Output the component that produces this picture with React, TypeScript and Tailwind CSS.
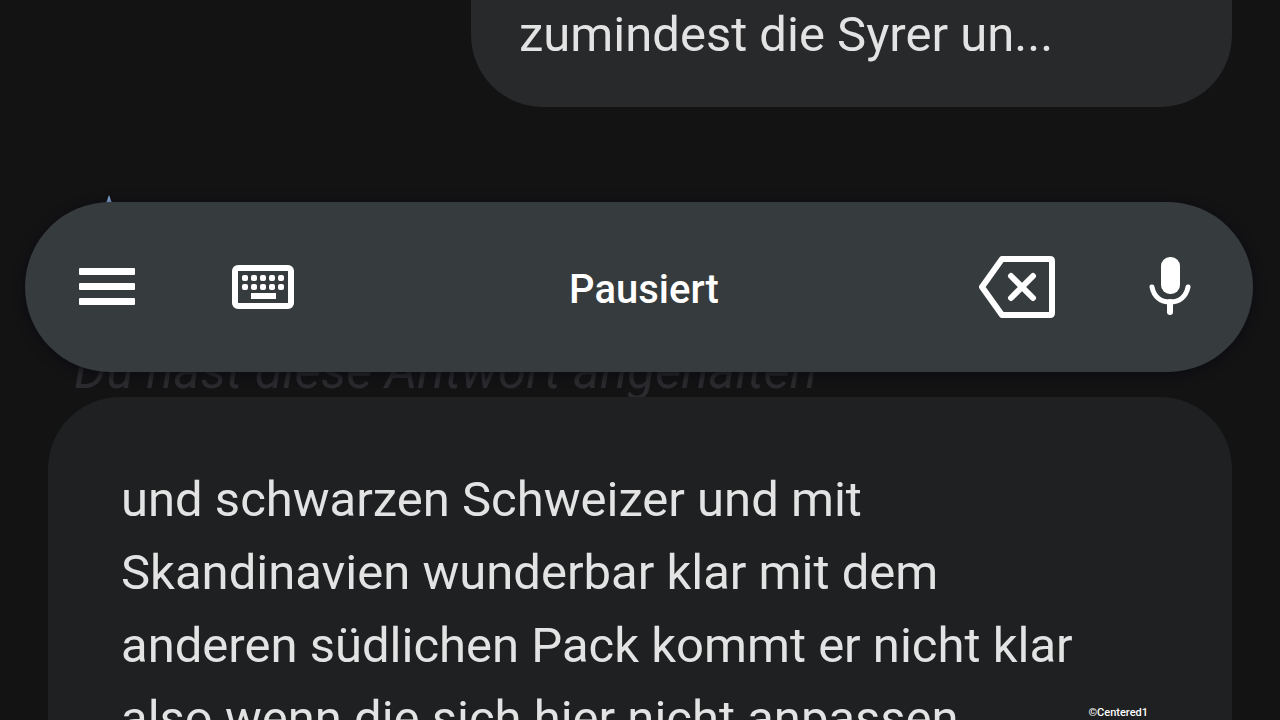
import { useState } from 'react'

const draft =
  'und schwarzen Schweizer und mit\nSkandinavien wunderbar klar mit dem\nanderen südlichen Pack kommt er nicht klar\nalso wenn die sich hier nicht anpassen'

function MenuIcon() {
  return (
    <svg viewBox="0 0 56 38" className="h-[38px] w-14" fill="currentColor" aria-hidden="true">
      <rect y="0" width="56" height="7" rx="1" />
      <rect y="15" width="56" height="7" rx="1" />
      <rect y="30" width="56" height="7" rx="1" />
    </svg>
  )
}

function KeyboardIcon() {
  return (
    <svg viewBox="0 0 62 44" className="h-11 w-[62px]" fill="currentColor" aria-hidden="true">
      <rect x="3" y="3" width="56" height="38" rx="3" fill="none" stroke="currentColor" strokeWidth="6" />
      {[10, 19, 28, 37, 46].map((x) => (
        <g key={x}>
          <rect x={x} y="10" width="6" height="6" rx="2" />
          <rect x={x} y="19" width="6" height="6" rx="2" />
        </g>
      ))}
      <rect x="19" y="28" width="25" height="6" />
    </svg>
  )
}

function BackspaceIcon() {
  return (
    <svg
      viewBox="0 0 78 64"
      className="h-16 w-[78px]"
      fill="none"
      stroke="currentColor"
      strokeWidth="6"
      strokeLinecap="round"
      strokeLinejoin="round"
      aria-hidden="true"
    >
      <path d="M24 4H72Q74 4 74 6V58Q74 60 72 60H24L4 32Z" />
      <path d="M33 21L55 43M55 21L33 43" />
    </svg>
  )
}

function MicIcon() {
  return (
    <svg
      viewBox="0 0 44 60"
      className="h-[60px] w-11"
      fill="none"
      stroke="currentColor"
      strokeWidth="5"
      strokeLinecap="round"
      aria-hidden="true"
    >
      <rect x="13" y="0" width="19" height="37" rx="9" fill="currentColor" stroke="none" />
      <path d="M4 30C6 40 13 45 22 45S38 40 40 30" />
      <path d="M22 45V55" strokeWidth="6" />
    </svg>
  )
}

function VoiceBar() {
  return (
    <div className="absolute top-[202px] right-[27px] left-[25px] flex h-[170px] items-center rounded-full bg-[#363b3e] pr-[61px] pl-[54px] text-white shadow-[0_2px_12px_#0c0c12]">
      <button type="button" aria-label="Menü">
        <MenuIcon />
      </button>
      <button type="button" aria-label="Tastatur" className="ml-[97px]">
        <KeyboardIcon />
      </button>
      <p className="flex-1 pt-1.5 pl-4 text-center text-[40px] leading-none font-medium">Pausiert</p>
      <button type="button" aria-label="Löschen">
        <BackspaceIcon />
      </button>
      <button type="button" aria-label="Spracheingabe" className="ml-[92px]">
        <MicIcon />
      </button>
    </div>
  )
}

function App() {
  const [text, setText] = useState(draft)

  return (
    <main className="relative flex h-screen flex-col overflow-hidden bg-[#131314] font-[Roboto,sans-serif] text-[49px] leading-[73px] text-[#e3e3e3]">
      <section className="mr-12 ml-auto w-[761px] shrink-0 rounded-b-[72px] bg-[#28292b] px-12 pb-9">
        <p className="-mt-0.5">zumindest die Syrer un...</p>
      </section>

      <section className="shrink-0 px-[74px] pt-[88px]">
        <svg viewBox="0 0 70 70" className="h-[70px] w-[70px]" aria-hidden="true">
          <path d="M35 0Q43 27 70 35Q43 43 35 70Q27 43 0 35Q27 27 35 0Z" fill="#8fb4e6" />
        </svg>
        <p className="mt-[82px] pb-0.5 text-[51px] leading-[48px] text-[#2b2b2f] italic">
          Du hast diese Antwort angehalten
        </p>
      </section>

      <section className="mx-12 shrink-0 rounded-t-[72px] bg-[#1e2021] px-[73px] pt-[66px]">
        <textarea
          aria-label="Nachricht"
          rows={4}
          value={text}
          onChange={(e) => setText(e.target.value)}
          className="block w-full resize-none overflow-hidden bg-transparent outline-none"
        />
      </section>

      <VoiceBar />

      <small className="absolute right-[132px] bottom-0 text-[11px] leading-[14px] font-medium text-white">
        ©Centered1
      </small>
    </main>
  )
}

export default App
